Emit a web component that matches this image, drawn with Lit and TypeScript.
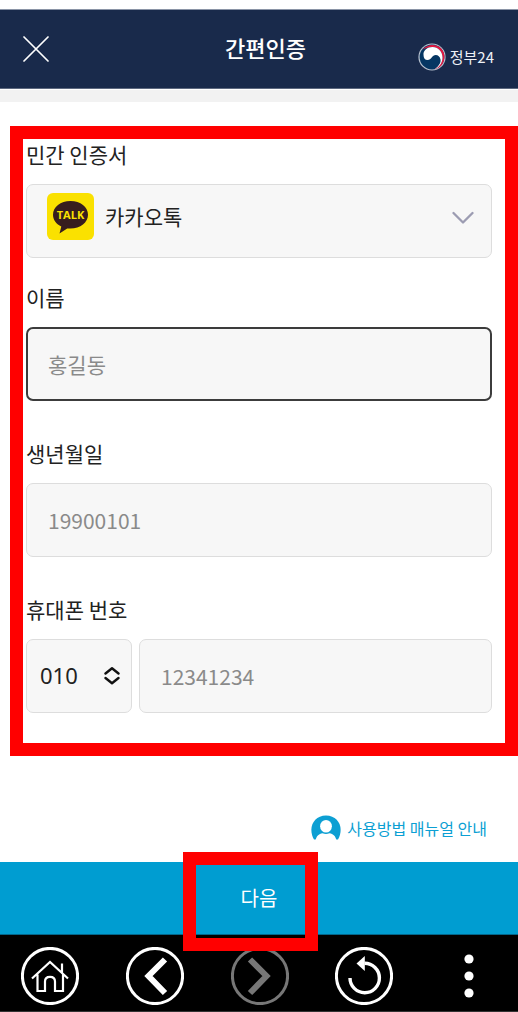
import { LitElement, html, css, svg } from "lit";
import { customElement } from "lit/decorators.js";

const chevronLeft = svg`<path d="M39 12.500 22.500 29 39 46" fill="none" stroke="currentColor" stroke-width="6"/>`;

@customElement("app-header")
class AppHeader extends LitElement {
  static styles = css`
    :host { display: block; padding-top: 9px; background: #fff; }
    .bar {
      display: grid; grid-template-columns: 1fr auto 1fr; align-items: center;
      height: 78px; padding: 0 10px 0 23px; background: #192a4b; color: #fff;
      border-top: 1px solid #8a94a6; border-bottom: 1px solid #5d6980;
    }
    .close { justify-self: start; padding: 0; border: 0; background: none; color: inherit; display: block; }
    svg { display: block; }
    h1 { margin: 0; padding-bottom: 4px; font-size: 22px; line-height: 32px; font-weight: 500; }
    .brand {
      justify-self: end; display: flex; align-items: center; gap: 4px; margin: 16px 14px 0 0;
      color: #eef1f6; font-size: 15px; line-height: 20px; text-decoration: none;
    }
    .strip { height: 12px; margin-top: 1px; background: #f2f2f2; }
  `;
  render() {
    return html`
      <header class="bar">
        <button class="close" aria-label="닫기">
          <svg width="26" height="26" viewBox="0 0 26 26" fill="none" stroke="#fff" stroke-width="1.7" stroke-linecap="round"><path d="M1 1 25 25M25 1 1 25"/></svg>
        </button>
        <h1>간편인증</h1>
        <a class="brand" href="#">
          <svg width="28" height="28" viewBox="0 0 28 28">
            <circle cx="14" cy="14" r="13.600" fill="#b9c2cf"/>
            <circle cx="14" cy="14" r="12.400" fill="#063763"/>
            <path d="M4.500 6.500C9 1.500 16 .500 21.500 4C27 8 28 16 24 21.500C22 24 20 25.500 16.500 26.400C22 23 24.500 19 24.500 14.500C24.500 8.500 20 4 14.500 4C11 4 7.500 5 4.500 6.500Z" fill="#e5173f"/>
            <path d="M5.500 12C5 7.500 9.500 4 14.500 4C20 4 24.500 8.500 24.500 14.500C24.500 19 22 24 16.500 26.400C21.500 22.500 23 19.500 22.500 16.500C22 13.500 20 12 17.800 12C14 12 13.500 17 9.500 17C7 17 5.500 15 5.500 12Z" fill="#fff"/>
          </svg>
          <span>정부24</span>
        </a>
      </header>
      <div class="strip"></div>
    `;
  }
}

@customElement("auth-form")
class AuthForm extends LitElement {
  static styles = css`
    :host { display: block; }
    * { box-sizing: border-box; }
    form { margin: 24px 0 0 10px; padding: 0 13px 30px 3px; border: 13px solid #f00; }
    .field { margin-top: 37px; }
    .field.first { margin-top: 0; }
    .field.second { margin-top: 24px; }
    label { display: block; margin-bottom: 14px; color: #222; font-size: 21px; line-height: 31px; }
    .control {
      display: block; width: 100%; height: 74px; margin: 0; padding: 0 21px;
      border: 1px solid #ddd; border-radius: 7px; background: #f7f7f7;
      color: #222; font-family: inherit; font-size: 21px; font-weight: 400; outline: none; appearance: none;
    }
    .control::placeholder { color: #8a8a8a; opacity: 1; }
    .active { border: 2px solid #3c3c3c; padding: 0 20px; }
    .wrap { position: relative; }
    .provider { padding: 0 50px 10px 78px; }
    .prefix { padding: 0 30px 2px 13px; font-family: "Noto Sans", sans-serif; font-size: 22px; }
    .talk { position: absolute; left: 21px; top: 9px; pointer-events: none; }
    .down { position: absolute; right: 18px; top: 27px; pointer-events: none; }
    .updown { position: absolute; right: 12px; top: 27px; pointer-events: none; }
    .phone { display: grid; grid-template-columns: 106px 1fr; gap: 7px; }
    .mark { font: 700 11px "Open Sans", sans-serif; }
  `;
  render() {
    return html`
      <form>
        <div class="field first">
          <label for="provider">민간 인증서</label>
          <div class="wrap">
            <select id="provider" class="control provider"><option>카카오톡</option></select>
            <svg class="talk" width="47" height="47" viewBox="0 0 47 47" aria-hidden="true">
              <rect width="47" height="47" rx="6" fill="#fae100"/>
              <path d="M23.500 8C13.500 8 6 14 6 21.800C6 27 9.500 31.300 14.300 33.600L12.500 40.500L20.200 35.400C32 36.800 41 30 41 21.800C41 14 33.500 8 23.500 8Z" fill="#371d1e"/>
              <text class="mark" x="23.500" y="26" text-anchor="middle" fill="#fae100">TALK</text>
            </svg>
            <svg class="down" width="22" height="14" viewBox="0 0 22 14" fill="none" stroke="#9c9cb2" stroke-width="2.300" stroke-linecap="round" stroke-linejoin="round" aria-hidden="true"><path d="M1.500 2 11 11.500 20.500 2"/></svg>
          </div>
        </div>
        <div class="field second">
          <label for="name">이름</label>
          <input id="name" class="control active" placeholder="홍길동">
        </div>
        <div class="field">
          <label for="birth">생년월일</label>
          <input id="birth" class="control" inputmode="numeric" placeholder="19900101">
        </div>
        <div class="field">
          <label for="phone">휴대폰 번호</label>
          <div class="phone">
            <div class="wrap">
              <select class="control prefix" aria-label="통신사 번호"><option>010</option></select>
              <svg class="updown" width="16" height="20" viewBox="0 0 16 20" fill="none" stroke="#111" stroke-width="2.400" stroke-linecap="round" stroke-linejoin="round" aria-hidden="true"><path d="M1.500 7.500 8 2.300 14.500 7.500M1.500 12 8 17.200 14.500 12"/></svg>
            </div>
            <input id="phone" class="control" type="tel" placeholder="12341234">
          </div>
        </div>
      </form>
    `;
  }
}

@customElement("app-nav")
class AppNav extends LitElement {
  static styles = css`
    :host { display: block; }
    nav { display: flex; justify-content: space-between; padding: 12px 20px 6px 21px; background: #000; border-bottom: 1px solid #333; }
    button { display: block; padding: 0; border: 0; background: none; color: #fff; }
    button:disabled { color: #777; }
    svg { display: block; }
  `;
  private ring = svg`<circle cx="29" cy="29" r="27.600" fill="none" stroke="currentColor" stroke-width="3"/>`;
  render() {
    return html`
      <nav>
        <button aria-label="홈"><svg width="58" height="58" viewBox="0 0 58 58">${this.ring}
          <path d="M11 31.500 29 15 47 31.500M41 26V16.500M16.500 27.500V44H24V34.500Q24 29.800 29 29.800T34 34.500V44H42V27.500" fill="none" stroke="currentColor" stroke-width="2.200"/></svg></button>
        <button aria-label="뒤로"><svg width="58" height="58" viewBox="0 0 58 58">${this.ring}${chevronLeft}</svg></button>
        <button aria-label="앞으로" disabled><svg width="58" height="58" viewBox="0 0 58 58">${this.ring}<g transform="matrix(-1 0 0 1 58 0)">${chevronLeft}</g></svg></button>
        <button aria-label="새로고침"><svg width="58" height="58" viewBox="0 0 58 58">${this.ring}
          <path d="M15 31A14.700 14.700 0 1 0 29.500 16.300" fill="none" stroke="currentColor" stroke-width="3.400"/>
          <path d="M21.500 16.500 29.800 9V24Z" fill="currentColor"/></svg></button>
        <button aria-label="메뉴"><svg width="58" height="58" viewBox="0 0 58 58" fill="currentColor"><circle cx="29" cy="12" r="4.600"/><circle cx="29" cy="29" r="4.600"/><circle cx="29" cy="46" r="4.600"/></svg></button>
      </nav>
    `;
  }
}

@customElement("app-root")
class AppRoot extends LitElement {
  static styles = css`
    :host { display: block; background: #fff; color: #222; font-family: "Noto Sans CJK KR", sans-serif; }
    .help { display: flex; justify-content: flex-end; padding: 56px 31px 18px; }
    .help a { display: flex; align-items: center; gap: 6px; color: #0c9fd3; font-size: 16px; line-height: 32px; text-decoration: none; }
    .help svg { display: block; }
    .action { position: relative; }
    .next {
      display: block; width: 100%; height: 73px; padding: 0; border: 0; border-bottom: 1px solid #02668a;
      background: #009dd1; color: #fff; font-family: inherit; font-size: 20px; line-height: 30px;
    }
    .focus {
      position: absolute; z-index: 1; left: calc(50% - 76px); top: -10px; width: 109px; height: 73px;
      border: 13px solid #f00; pointer-events: none;
    }
  `;
  render() {
    return html`
      <app-header></app-header>
      <main>
        <auth-form></auth-form>
        <div class="help">
          <a href="#">
            <svg width="30" height="26" viewBox="0 0 30 26" aria-hidden="true">
              <path d="M3 24.500C-3.500 13 2.500 .500 15 .500S33.500 13 27 24.500Z" fill="#0c9fd3"/>
              <path d="M4.500 26C5 21.500 8 18.600 11.500 18.300Q15 19.800 18.500 18.300C22 18.600 25 21.500 25.500 26Z" fill="#fff"/>
              <ellipse cx="15" cy="11.300" rx="5.900" ry="6.300" fill="#fff"/>
            </svg>
            <span>사용방법 매뉴얼 안내</span>
          </a>
        </div>
        <div class="action">
          <button class="next">다음</button>
          <div class="focus"></div>
        </div>
      </main>
      <app-nav></app-nav>
    `;
  }
}
